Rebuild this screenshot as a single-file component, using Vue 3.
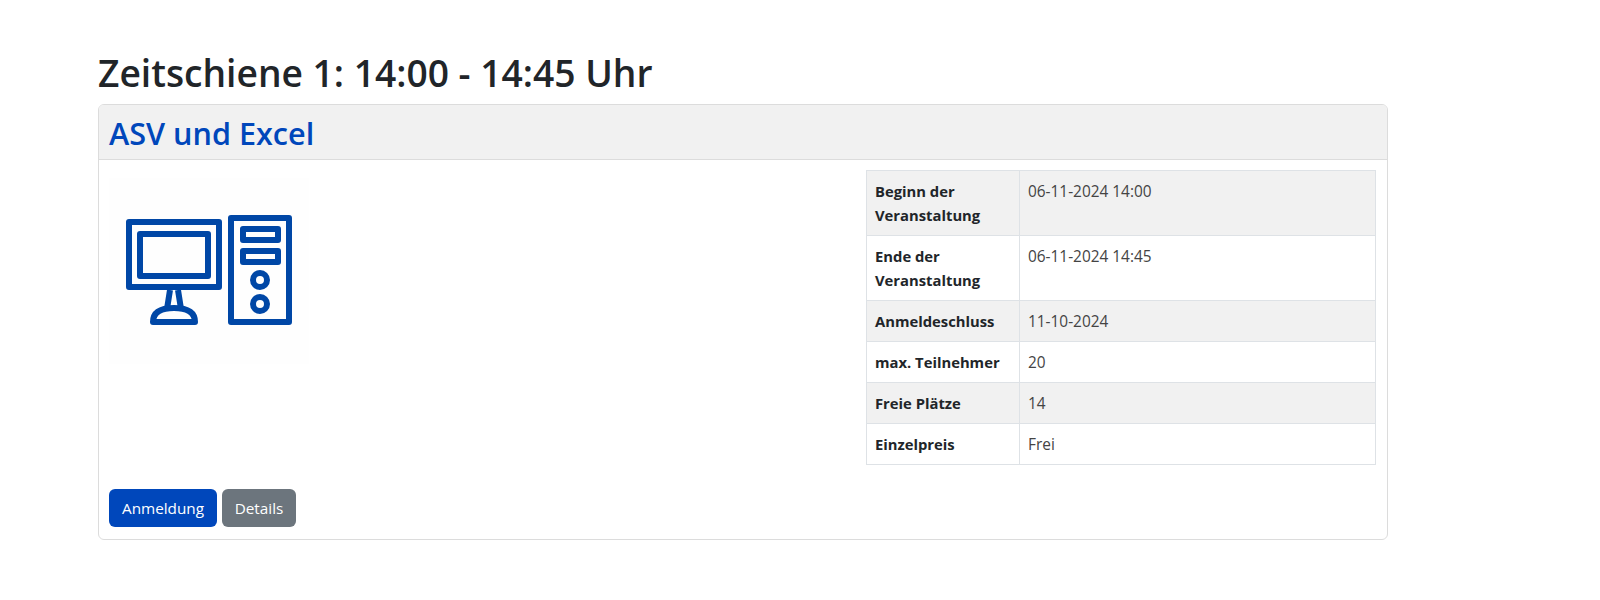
<script setup>
const rows = [
  { label: 'Beginn der Veranstaltung', value: '06-11-2024 14:00' },
  { label: 'Ende der Veranstaltung', value: '06-11-2024 14:45' },
  { label: 'Anmeldeschluss', value: '11-10-2024' },
  { label: 'max. Teilnehmer', value: '20' },
  { label: 'Freie Plätze', value: '14' },
  { label: 'Einzelpreis', value: 'Frei' }
]
</script>

<template>
  <main class="page">
    <h2 class="slot-title">Zeitschiene 1: 14:00 - 14:45 Uhr</h2>
    <section class="card">
      <header class="card-head">
        <a class="card-title" href="#">ASV und Excel</a>
      </header>
      <div class="card-body">
        <div class="row">
          <div class="pic">
            <svg width="200" height="200" viewBox="109 170 200 200" fill="none" stroke="#0047a6" stroke-width="6" stroke-linejoin="round" aria-hidden="true">
              <rect x="109" y="178" width="200" height="186" fill="#fefefe" stroke="none" />
              <rect x="129" y="222" width="90" height="65" />
              <rect x="140" y="234" width="68" height="42" />
              <path d="M170 290 L167 309 M178 290 L181 309" />
              <path d="M153 322 C153 312 161 308 174 308 C187 308 195 312 195 322 Z" />
              <rect x="231" y="218" width="58" height="104" />
              <rect x="243" y="229" width="35" height="11" />
              <rect x="243" y="251" width="35" height="11" />
              <circle cx="260" cy="280" r="7" />
              <circle cx="260" cy="304" r="7" />
            </svg>
          </div>
          <table class="facts">
            <tbody>
              <tr v-for="row in rows" :key="row.label">
                <th>{{ row.label }}</th>
                <td>{{ row.value }}</td>
              </tr>
            </tbody>
          </table>
        </div>
        <div class="actions">
          <button type="button" class="btn primary">Anmeldung</button>
          <button type="button" class="btn secondary">Details</button>
        </div>
      </div>
    </section>
  </main>
</template>

<style>
body {
  background: #fff;
}
</style>

<style scoped>
.page {
  width: 1290px;
  padding: 47px 0 0 98px;
  font-family: "Open Sans", "Noto Sans", sans-serif;
  color: #212529;
}
.slot-title {
  margin: 0 0 5px;
  font-size: 37.2px;
  line-height: 52px;
  font-weight: 600;
}
.card {
  border: 1px solid #dcdcdc;
  border-radius: 6px;
  overflow: hidden;
}
.card-head {
  background: #f1f1f1;
  border-bottom: 1px solid #dcdcdc;
  padding: 8px 10px;
  height: 55px;
  box-sizing: border-box;
}
.card-title {
  color: #0047bb;
  font-size: 30.6px;
  line-height: 40px;
  font-weight: 600;
  text-decoration: none;
}
.card-body {
  padding: 10px 10px 12px;
}
.row {
  display: flex;
  justify-content: space-between;
  padding-right: 1px;
}
.pic svg {
  display: block;
}
.facts {
  width: 510px;
  border-collapse: collapse;
  table-layout: fixed;
  font-size: 15.4px;
  line-height: 24px;
}
.facts th,
.facts td {
  border: 1px solid #dee2e6;
  padding: 8px;
  vertical-align: top;
  text-align: left;
}
.facts th {
  width: 136px;
  font-size: 14.8px;
  font-weight: 700;
  color: #212529;
}
.facts td {
  padding: 9px 8px 7px;
  color: #444;
}
.facts tr:nth-child(odd) {
  background: #f1f1f1;
}
.actions {
  display: flex;
  gap: 5px;
  margin-top: 24px;
}
.btn {
  width: 108px;
  height: 38px;
  padding: 0;
  border-radius: 6px;
  border: 1px solid transparent;
  font: inherit;
  font-size: 15.3px;
  color: #fff;
}
.primary {
  background: #0047bb;
}
.secondary {
  width: 74px;
  background: #6c757d;
}
</style>
